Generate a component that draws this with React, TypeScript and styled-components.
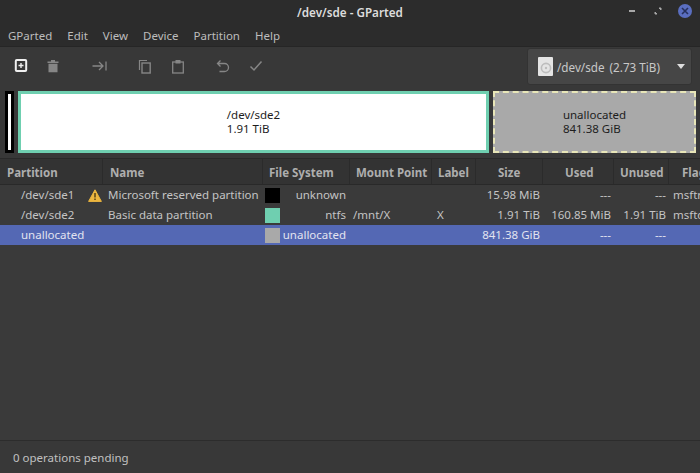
import React from 'react'
import styled, { createGlobalStyle } from 'styled-components'

const COLUMNS = '103px 160px 87px 82px 44px 67px 71px 55px 31px'

type Row = {
  partition: string
  warn?: boolean
  name: string
  color: string
  fs: string
  mount: string
  label: string
  size: string
  used: string
  unused: string
  flags: string
  selected?: boolean
}

const rows: Row[] = [
  { partition: '/dev/sde1', warn: true, name: 'Microsoft reserved partition', color: '#000000', fs: 'unknown', mount: '', label: '', size: '15.98 MiB', used: '---', unused: '---', flags: 'msftres' },
  { partition: '/dev/sde2', name: 'Basic data partition', color: '#6fcfb0', fs: 'ntfs', mount: '/mnt/X', label: 'X', size: '1.91 TiB', used: '160.85 MiB', unused: '1.91 TiB', flags: 'msftdata' },
  { partition: 'unallocated', name: '', color: '#a9a9a9', fs: 'unallocated', mount: '', label: '', size: '841.38 GiB', used: '---', unused: '---', flags: '', selected: true },
]

const headers = [
  { title: 'Partition', pad: 7 },
  { title: 'Name', pad: 7 },
  { title: 'File System', pad: 6 },
  { title: 'Mount Point', pad: 6 },
  { title: 'Label', pad: 6 },
  { title: 'Size', pad: 22 },
  { title: 'Used', pad: 22 },
  { title: 'Unused', pad: 6 },
  { title: 'Flags', pad: 13 },
]

const menus = ['GParted', 'Edit', 'View', 'Device', 'Partition', 'Help']

export default function App() {
  return (
    <Window>
      <GlobalStyle />
      <TitleBar>
        <Title>/dev/sde - GParted</Title>
        <WindowButtons>
          <svg width="10" height="10" viewBox="0 0 10 10">
            <rect x="1" y="4" width="6" height="2" fill="#a8a8a8" />
          </svg>
          <svg width="10" height="10" viewBox="0 0 10 10">
            <path d="M6 2h2v2zM2 6v2h2z" fill="#a8a8a8" stroke="#a8a8a8" />
          </svg>
          <CloseButton>
            <svg width="8" height="8" viewBox="0 0 8 8">
              <path d="M1 1l6 6M7 1l-6 6" stroke="#26305c" strokeWidth="1.6" />
            </svg>
          </CloseButton>
        </WindowButtons>
      </TitleBar>

      <MenuBar>
        {menus.map((m) => (
          <MenuItem key={m}>{m}</MenuItem>
        ))}
      </MenuBar>

      <Toolbar>
        <Tools>
          <ToolIcon $left={14}>
            <svg width="14" height="14" viewBox="0 0 14 14">
              <rect x="1.8" y="1" width="10.4" height="11" fill="none" stroke="#f0f0f0" strokeWidth="2" rx="1" />
              <path d="M7 4v5M4.5 6.5h5" stroke="#f0f0f0" strokeWidth="1.4" />
            </svg>
          </ToolIcon>
          <ToolIcon $left={18}>
            <svg width="14" height="14" viewBox="0 0 14 14">
              <path d="M1.5 2.5h11V4h-11zM5 1h4v1.5H5zM2.5 4.8h9v8.5h-9z" fill="#868686" />
            </svg>
          </ToolIcon>
          <ToolIcon $left={32}>
            <svg width="16" height="14" viewBox="0 0 16 14">
              <path d="M0.5 7h10M7 3l4 4-4 4M14 2.5v9" fill="none" stroke="#868686" strokeWidth="1.3" />
            </svg>
          </ToolIcon>
          <ToolIcon $left={30}>
            <svg width="14" height="15" viewBox="0 0 14 15">
              <path d="M9 1.5H1.5V11" fill="none" stroke="#868686" strokeWidth="1.2" />
              <rect x="4" y="4" width="8.2" height="10" fill="none" stroke="#868686" strokeWidth="1.4" />
            </svg>
          </ToolIcon>
          <ToolIcon $left={19}>
            <svg width="14" height="15" viewBox="0 0 14 15">
              <rect x="1.7" y="3" width="10.6" height="11" fill="none" stroke="#868686" strokeWidth="1.3" />
              <rect x="4.5" y="1" width="5" height="3.5" fill="#868686" />
            </svg>
          </ToolIcon>
          <ToolIcon $left={31}>
            <svg width="14" height="14" viewBox="0 0 14 14">
              <path d="M4.5 1.5L1.5 4.5l3 3M1.5 4.5h7a3.5 3.5 0 0 1 0 8H3.5" fill="none" stroke="#868686" strokeWidth="1.3" />
            </svg>
          </ToolIcon>
          <ToolIcon $left={19}>
            <svg width="14" height="14" viewBox="0 0 14 14">
              <path d="M1.5 7.5l3.5 3.5 7.5-8.5" fill="none" stroke="#868686" strokeWidth="1.5" />
            </svg>
          </ToolIcon>
        </Tools>
        <DeviceCombo>
          <DiskIcon>
            <svg width="15" height="19" viewBox="0 0 15 19">
              <rect width="15" height="19" rx="1" fill="#e4e4e4" />
              <circle cx="8" cy="11" r="4.6" fill="none" stroke="#bdbdbd" strokeWidth="1.6" />
              <circle cx="8" cy="11" r="1.2" fill="#bdbdbd" />
            </svg>
          </DiskIcon>
          <DeviceName>/dev/sde</DeviceName>
          <DeviceSize>(2.73 TiB)</DeviceSize>
          <ComboArrow />
        </DeviceCombo>
      </Toolbar>

      <GraphBar>
        <SmallPartition>
          <SmallInner />
        </SmallPartition>
        <MainPartition>
          <PartitionText>
            /dev/sde2
            <br />
            1.91 TiB
          </PartitionText>
        </MainPartition>
        <FreePartition>
          <PartitionText>
            unallocated
            <br />
            841.38 GiB
          </PartitionText>
        </FreePartition>
      </GraphBar>

      <HeaderRow>
        {headers.map((h) => (
          <HeaderCell key={h.title} $pad={h.pad}>
            {h.title}
          </HeaderCell>
        ))}
      </HeaderRow>

      <List>
        {rows.map((r) => (
          <DataRow key={r.partition} $selected={r.selected}>
            <PartitionCell>
              {r.partition}
              {r.warn && (
                <WarnIcon>
                  <svg width="14" height="13" viewBox="0 0 14 13">
                    <path d="M7 0.8L13.4 12.4H0.6z" fill="#ecb63f" stroke="#ecb63f" strokeLinejoin="round" />
                    <path d="M6.3 4h1.4v4.6H6.3zM6.3 9.6h1.4V11H6.3z" fill="#4a3a14" />
                  </svg>
                </WarnIcon>
              )}
            </PartitionCell>
            <NameCell>{r.name}</NameCell>
            <FsCell>
              <Swatch $color={r.color} />
              <FsName>{r.fs}</FsName>
            </FsCell>
            <MountCell>{r.mount}</MountCell>
            <LabelCell>{r.label}</LabelCell>
            <NumberCell>{r.size}</NumberCell>
            <NumberCell>{r.used}</NumberCell>
            <NumberCell>{r.unused}</NumberCell>
            <FlagsCell>{r.flags}</FlagsCell>
          </DataRow>
        ))}
      </List>

      <StatusBar>0 operations pending</StatusBar>
    </Window>
  )
}

const GlobalStyle = createGlobalStyle`
  html, body {
    margin: 0;
    padding: 0;
    background: #333333;
  }
  * {
    box-sizing: border-box;
  }
`

const Window = styled.div`
  width: 700px;
  height: 473px;
  display: flex;
  flex-direction: column;
  overflow: hidden;
  background: #3a3a3a;
  color: #d6d6d6;
  font-family: 'Noto Sans', 'Open Sans', sans-serif;
  font-size: 11.5px;
`

const TitleBar = styled.div`
  position: relative;
  height: 23px;
  flex: none;
  display: flex;
  align-items: center;
  justify-content: center;
  padding-top: 1px;
  background: #2c2c2c;
`

const Title = styled.div`
  font-size: 11.7px;
  font-weight: 600;
  color: #dcdcdc;
`

const WindowButtons = styled.div`
  position: absolute;
  right: 8px;
  top: 4px;
  display: flex;
  align-items: center;
  gap: 15px;
`

const CloseButton = styled.div`
  width: 14px;
  height: 14px;
  border-radius: 50%;
  background: #5a6ec0;
  display: flex;
  align-items: center;
  justify-content: center;
`

const MenuBar = styled.div`
  height: 24px;
  flex: none;
  display: flex;
  align-items: center;
  gap: 15px;
  padding: 1px 0 0 8px;
  background: #2c2c2c;
  border-bottom: 1px solid #262626;
`

const MenuItem = styled.div`
  color: #bdbdbd;
  font-size: 11.5px;
`

const Toolbar = styled.div`
  height: 41px;
  flex: none;
  display: flex;
  align-items: flex-start;
  justify-content: space-between;
  padding: 0 8px 0 0;
  background: #383838;
`

const Tools = styled.div`
  display: flex;
  align-items: center;
  height: 38px;
`

const ToolIcon = styled.div<{ $left: number }>`
  margin-left: ${(p) => p.$left}px;
  display: flex;
`

const DeviceCombo = styled.div`
  width: 165px;
  height: 37px;
  margin-top: 1px;
  display: flex;
  align-items: center;
  padding: 0 4px 0 10px;
  background: #464646;
  border: 1px solid #333333;
  border-radius: 3px;
  font-size: 11.7px;
`

const DiskIcon = styled.div`
  display: flex;
  margin-right: 4px;
`

const DeviceName = styled.span`
  color: #c8c8c8;
  margin-right: 5px;
`

const DeviceSize = styled.span`
  color: #c8c8c8;
`

const ComboArrow = styled.div`
  margin-left: auto;
  margin-right: 2px;
  width: 0;
  height: 0;
  border-left: 4.5px solid transparent;
  border-right: 4.5px solid transparent;
  border-top: 5px solid #dedede;
`

const GraphBar = styled.div`
  height: 70px;
  flex: none;
  display: flex;
  align-items: stretch;
  padding: 3px 4px 5px 5px;
  background: #383838;
`

const SmallPartition = styled.div`
  width: 9px;
  margin-right: 4px;
  padding: 3px;
  background: #000000;
`

const SmallInner = styled.div`
  height: 100%;
  background: #ffffff;
`

const MainPartition = styled.div`
  width: 471px;
  display: flex;
  align-items: center;
  justify-content: center;
  background: #ffffff;
  border: 3px solid #6fcfb0;
`

const FreePartition = styled.div`
  flex: 1;
  margin-left: 4px;
  display: flex;
  align-items: center;
  justify-content: center;
  background: #a9a9a9;
  border: 2px dashed #e8e6b8;
`

const PartitionText = styled.div`
  color: #1d1d1d;
  font-size: 11.5px;
  line-height: 14px;
`

const HeaderRow = styled.div`
  height: 27px;
  flex: none;
  display: grid;
  grid-template-columns: ${COLUMNS};
  background: #333333;
  border-top: 1px solid #2a2a2a;
  border-bottom: 1px solid #292929;
`

const HeaderCell = styled.div<{ $pad: number }>`
  display: flex;
  align-items: center;
  padding: 2px 0 0 ${(p) => p.$pad}px;
  font-weight: 700;
  font-size: 11.5px;
  color: #aeaeae;
  white-space: nowrap;
  overflow: hidden;
  border-right: 1px solid #2b2b2b;

  &:last-child {
    border-right: 0;
  }
`

const List = styled.div`
  flex: 1;
  background: #3a3a3a;
  overflow: hidden;
`

const DataRow = styled.div<{ $selected?: boolean }>`
  height: 20px;
  display: grid;
  grid-template-columns: ${COLUMNS};
  align-items: center;
  padding-bottom: 1px;
  white-space: nowrap;
  color: ${(p) => (p.$selected ? '#e2e4f0' : '#c4c4c4')};
  background: ${(p) => (p.$selected ? '#5468b4' : 'transparent')};
`

const PartitionCell = styled.div`
  position: relative;
  height: 100%;
  display: flex;
  align-items: center;
  padding-left: 21px;
`

const WarnIcon = styled.span`
  position: absolute;
  left: 88px;
  top: 4px;
  display: flex;
`

const NameCell = styled.div`
  padding-left: 5px;
  overflow: hidden;
`

const FsCell = styled.div`
  height: 100%;
  display: flex;
  align-items: center;
  padding: 0 4px 0 2px;
`

const Swatch = styled.span<{ $color: string }>`
  width: 15px;
  height: 15px;
  flex: none;
  margin-top: 1px;
  background: ${(p) => p.$color};
`

const FsName = styled.span`
  flex: 1;
  text-align: right;
`

const MountCell = styled.div`
  padding-left: 3px;
`

const LabelCell = styled.div`
  padding-left: 5px;
`

const NumberCell = styled.div`
  text-align: right;
  padding-right: 3px;
`

const FlagsCell = styled.div`
  padding-left: 4px;
  overflow: hidden;
`

const StatusBar = styled.div`
  height: 33px;
  flex: none;
  display: flex;
  align-items: center;
  padding-left: 13px;
  background: #383838;
  border-top: 1px solid #2c2c2c;
  color: #c0c0c0;
  font-size: 11.5px;
`
